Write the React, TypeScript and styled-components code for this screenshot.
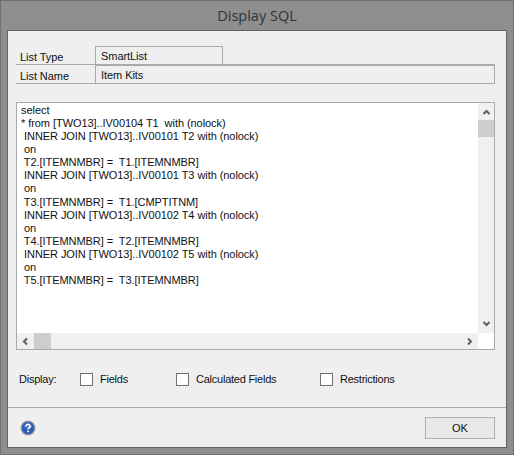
import styled, { createGlobalStyle } from 'styled-components'

const GlobalStyle = createGlobalStyle`
  html, body {
    margin: 0;
    padding: 0;
    background: #8e8e8e;
  }
  body {
    font-family: "Liberation Sans", Arial, sans-serif;
    font-size: 11px;
    letter-spacing: -0.06px;
    color: #111;
  }
`

const WindowFrame = styled.div`
  width: 514px;
  height: 455px;
  box-sizing: border-box;
  border: 1px solid #6f6f6f;
  background: #8e8e8e;
  display: flex;
  flex-direction: column;
  padding: 0 6px 6px 6px;
`

const TitleBar = styled.div`
  height: 29px;
  flex: none;
  display: flex;
  align-items: center;
  justify-content: center;
  font-family: "Open Sans", sans-serif;
  font-size: 14.5px;
  letter-spacing: 0;
  color: #2f353a;
`

const Client = styled.div`
  flex: 1;
  display: flex;
  flex-direction: column;
  background: #efefef;
  border: 1px solid #636363;
  min-height: 0;
`

const Body = styled.div`
  flex: 1;
  display: flex;
  flex-direction: column;
  padding: 15px 11px 0 8px;
  min-height: 0;
`

const InfoRow = styled.div`
  display: flex;
  height: 19px;
  box-sizing: border-box;
  border-bottom: 1px solid #a9a9b0;
`

const InfoLabel = styled.div`
  width: 80px;
  flex: none;
  box-sizing: border-box;
  padding: 3px 0 0 4px;
  line-height: 16px;
  border-right: 1px solid #a9a9b0;
`

const InfoValue = styled.div<{ $width?: number }>`
  ${({ $width }) => ($width ? `width: ${$width}px; flex: none;` : 'flex: 1;')}
  box-sizing: border-box;
  padding: 1px 0 0 5px;
  line-height: 16px;
  border-top: 1px solid #a9a9b0;
  border-right: 1px solid #a9a9b0;
`

const SqlBox = styled.div`
  margin-top: 18px;
  height: 248px;
  box-sizing: border-box;
  flex: none;
  border: 1px solid #a9a9b0;
  display: grid;
  grid-template-columns: 1fr 16px;
  grid-template-rows: 1fr 16px;
  background: #fff;
`

const SqlText = styled.pre`
  margin: 0;
  padding: 1px 0 0 4px;
  font: inherit;
  line-height: 13.08px;
  overflow: hidden;
  white-space: pre;
`

const ScrollTrack = styled.div<{ $vertical?: boolean }>`
  background: #f0f0f0;
  display: flex;
  flex-direction: ${({ $vertical }) => ($vertical ? 'column' : 'row')};
  align-items: stretch;
`

const ScrollArrow = styled.div`
  width: 17px;
  height: 17px;
  flex: none;
  display: flex;
  align-items: center;
  justify-content: center;
`

const VerticalThumb = styled.div`
  height: 17px;
  background: #cdcdcd;
  flex: none;
`

const HorizontalThumb = styled.div`
  width: 17px;
  background: #cdcdcd;
  flex: none;
`

const ScrollGap = styled.div`
  flex: 1;
`

const DisplayRow = styled.div`
  display: flex;
  align-items: center;
  height: 16px;
  margin-top: 21px;
  padding-left: 3px;
  letter-spacing: -0.24px;
`

const DisplayLabel = styled.span`
  width: 61px;
  flex: none;
`

const CheckItem = styled.label<{ $width: number }>`
  width: ${({ $width }) => $width}px;
  flex: none;
  display: flex;
  align-items: center;
  gap: 7px;
`

const CheckBox = styled.span`
  width: 13px;
  height: 13px;
  box-sizing: border-box;
  background: #fff;
  border: 1px solid #707070;
  flex: none;
`

const Footer = styled.div`
  flex: none;
  height: 39px;
  border-top: 1px solid #a9a9b0;
  display: flex;
  align-items: center;
  justify-content: space-between;
  padding: 0 11px 0 12px;
`

const OkButton = styled.button`
  width: 70px;
  height: 22px;
  box-sizing: border-box;
  background: #e9e9e9;
  border: 1px solid #adadad;
  font: inherit;
  color: #111;
  padding: 0;
`

function Chevron({ d }: { d: string }) {
  return (
    <svg width="9" height="9" viewBox="0 0 9 9" aria-hidden>
      <path d={d} fill="none" stroke="#5f5f5f" strokeWidth="2" />
    </svg>
  )
}

function HelpIcon() {
  return (
    <svg width="16" height="16" viewBox="0 0 16 16" aria-hidden>
      <circle cx="8" cy="8" r="7.5" fill="#9a9a9a" />
      <circle cx="8" cy="8" r="6.2" fill="#2a5cb8" />
      <path d="M3.5 7a5 4 0 0 1 9 0a8 4 0 0 1-9 0" fill="#5c8ee0" />
      <path d="M6 6.2a2.1 2 0 1 1 3.2 1.7c-.8.5-1.2.8-1.2 1.6" fill="none" stroke="#fff" strokeWidth="1.5" />
      <rect x="7.2" y="10.6" width="1.6" height="1.6" fill="#fff" />
    </svg>
  )
}

const SQL = `select
* from [TWO13]..IV00104 T1  with (nolock)
 INNER JOIN [TWO13]..IV00101 T2 with (nolock)
 on
 T2.[ITEMNMBR] =  T1.[ITEMNMBR]
 INNER JOIN [TWO13]..IV00101 T3 with (nolock)
 on
 T3.[ITEMNMBR] =  T1.[CMPTITNM]
 INNER JOIN [TWO13]..IV00102 T4 with (nolock)
 on
 T4.[ITEMNMBR] =  T2.[ITEMNMBR]
 INNER JOIN [TWO13]..IV00102 T5 with (nolock)
 on
 T5.[ITEMNMBR] =  T3.[ITEMNMBR]`

export default function App() {
  return (
    <>
      <GlobalStyle />
      <WindowFrame>
        <TitleBar>Display SQL</TitleBar>
        <Client>
          <Body>
            <InfoRow>
              <InfoLabel>List Type</InfoLabel>
              <InfoValue $width={127}>SmartList</InfoValue>
            </InfoRow>
            <InfoRow>
              <InfoLabel>List Name</InfoLabel>
              <InfoValue>Item Kits</InfoValue>
            </InfoRow>
            <SqlBox>
              <SqlText>{SQL}</SqlText>
              <ScrollTrack $vertical>
                <ScrollArrow>
                  <Chevron d="M1.5 7 L4.5 4 L7.5 7" />
                </ScrollArrow>
                <VerticalThumb />
                <ScrollGap />
                <ScrollArrow>
                  <Chevron d="M1.5 2 L4.5 5 L7.5 2" />
                </ScrollArrow>
              </ScrollTrack>
              <ScrollTrack>
                <ScrollArrow>
                  <Chevron d="M6 1.5 L3 4.5 L6 7.5" />
                </ScrollArrow>
                <HorizontalThumb />
                <ScrollGap />
                <ScrollArrow>
                  <Chevron d="M3 1.5 L6 4.5 L3 7.5" />
                </ScrollArrow>
              </ScrollTrack>
              <div />
            </SqlBox>
            <DisplayRow>
              <DisplayLabel>Display:</DisplayLabel>
              <CheckItem $width={96}>
                <CheckBox />
                Fields
              </CheckItem>
              <CheckItem $width={144}>
                <CheckBox />
                Calculated Fields
              </CheckItem>
              <CheckItem $width={100}>
                <CheckBox />
                Restrictions
              </CheckItem>
            </DisplayRow>
          </Body>
          <Footer>
            <HelpIcon />
            <OkButton>OK</OkButton>
          </Footer>
        </Client>
      </WindowFrame>
    </>
  )
}
